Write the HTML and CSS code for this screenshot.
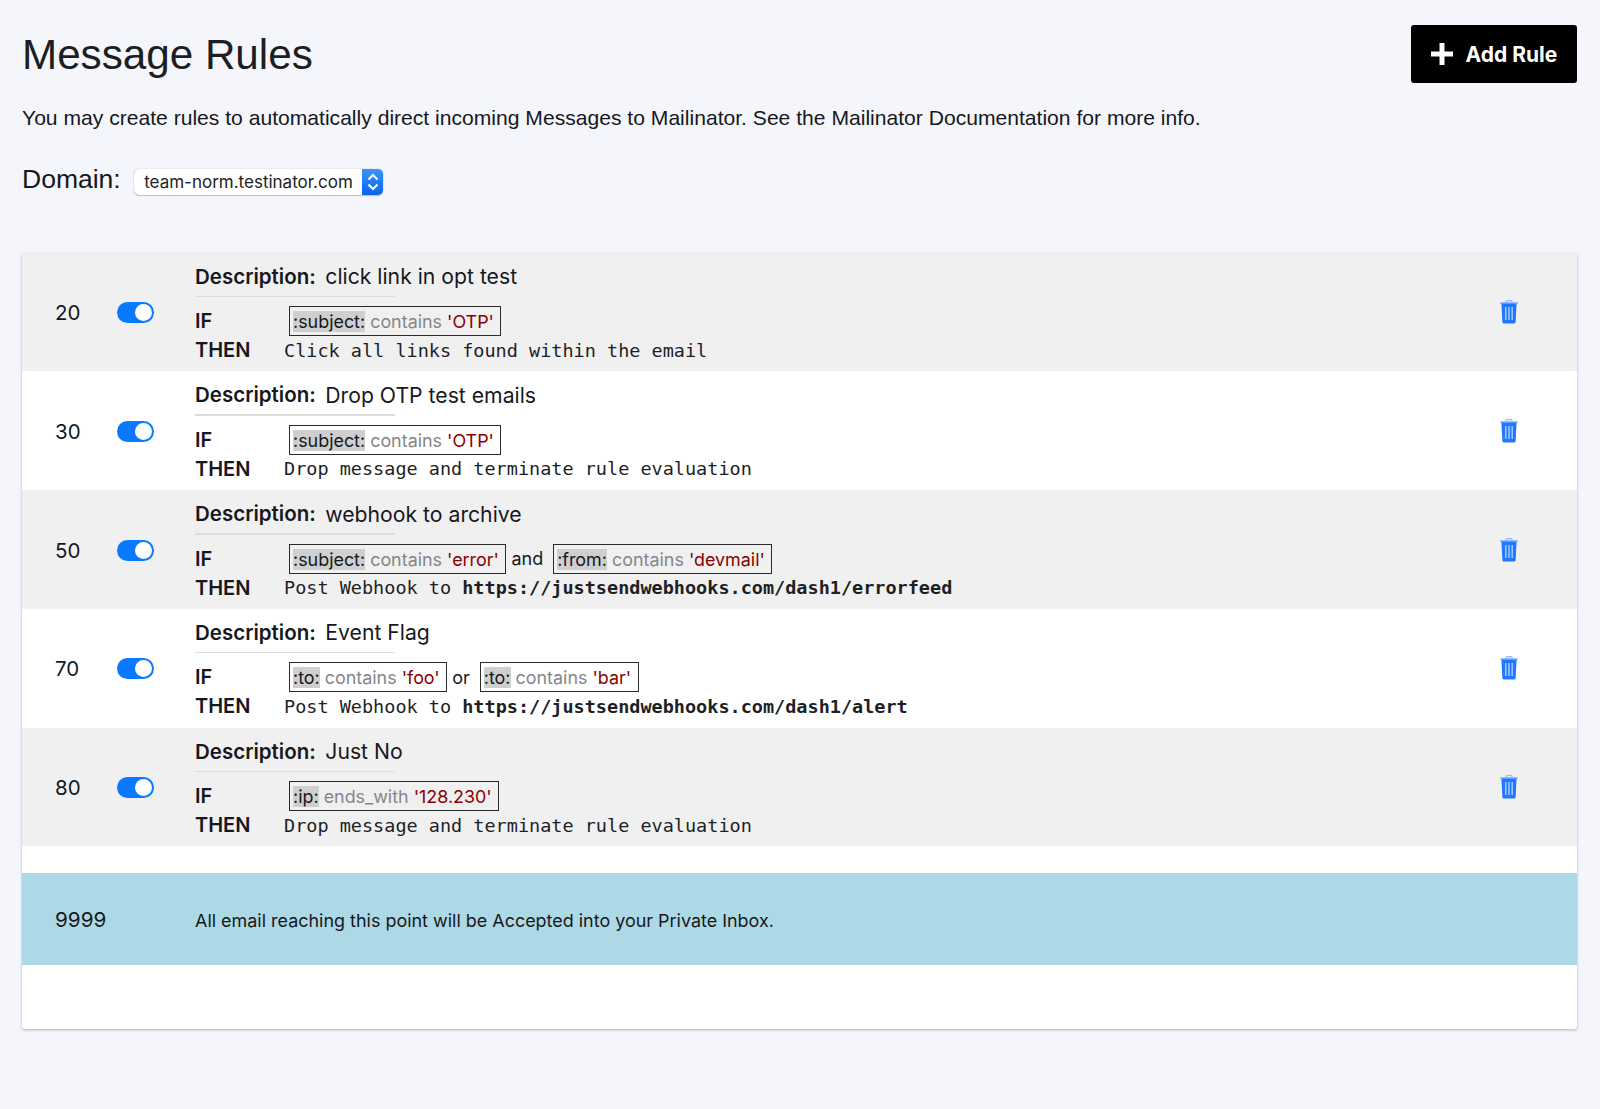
FILE: index.html
```html
<!DOCTYPE html>
<html lang="en">
<head>
<meta charset="utf-8">
<title>Message Rules</title>
<link rel="stylesheet" href="styles.css">
</head>
<body>
<svg class="defs" width="0" height="0" aria-hidden="true">
  <symbol id="trash" viewBox="0 0 18 24">
    <path d="M6 2.6V1.6C6 1 6.5.6 7 .6h4c.5 0 1 .4 1 1v1" fill="none" stroke="#8fb8ff" stroke-width="1.2"/>
    <path d="M.2 2.4h17.6v1.2H.2z" fill="#5a9bff"/>
    <path d="M1.4 3.6h15.2l-1 18.6c0 .7-.6 1.2-1.2 1.2H3.600c-.6 0-1.2-.5-1.2-1.2z" fill="#1f78ff"/>
    <path d="M5 7h1.600v13H5zM8.200 7h1.600v13H8.200zM11.400 7H13v13h-1.600z" fill="#9cc3ff"/>
  </symbol>
</svg>
<main class="page">
  <header class="top">
    <h1 class="title">Message Rules</h1>
    <button class="add" type="button">
      <svg class="plus" viewBox="0 0 22 22" width="22" height="22" aria-hidden="true"><path d="M8.500 0h5v8.500H22v5h-8.500V22h-5v-8.500H0v-5h8.500z" fill="#fff"/></svg>
      <span>Add Rule</span>
    </button>
  </header>
  <p class="intro">You may create rules to automatically direct incoming Messages to Mailinator. See the Mailinator Documentation for more info.</p>
  <div class="domain">
    <span class="domain-label">Domain:</span>
    <div class="select">
      <span class="select-text">team-norm.testinator.com</span>
      <span class="select-arrows">
        <svg viewBox="0 0 20 26" width="20" height="26" aria-hidden="true"><path d="M5.500 10.500 10 6l4.500 4.500M5.500 15.500 10 20l4.500-4.500" fill="none" stroke="#fff" stroke-width="2"/></svg>
      </span>
    </div>
  </div>

  <section class="card">
    <article class="rule shaded">
      <div class="num">20</div>
      <div class="toggle-cell"><span class="toggle"><span class="knob"></span></span></div>
      <div class="body">
        <div class="desc"><b>Description:</b><span class="desc-text">click link in opt test</span></div>
        <hr class="sep">
        <div class="line"><b class="kw">IF</b><span class="cond-list"><span class="cond"><span class="field">:subject:</span> <span class="op">contains</span> <span class="val">'OTP'</span></span></span></div>
        <div class="line"><b class="kw">THEN</b><code class="act">Click all links found within the email</code></div>
      </div>
      <div class="del"><svg class="trash" aria-hidden="true"><use href="#trash"/></svg></div>
    </article>
    <article class="rule">
      <div class="num">30</div>
      <div class="toggle-cell"><span class="toggle"><span class="knob"></span></span></div>
      <div class="body">
        <div class="desc"><b>Description:</b><span class="desc-text">Drop OTP test emails</span></div>
        <hr class="sep">
        <div class="line"><b class="kw">IF</b><span class="cond-list"><span class="cond"><span class="field">:subject:</span> <span class="op">contains</span> <span class="val">'OTP'</span></span></span></div>
        <div class="line"><b class="kw">THEN</b><code class="act">Drop message and terminate rule evaluation</code></div>
      </div>
      <div class="del"><svg class="trash" aria-hidden="true"><use href="#trash"/></svg></div>
    </article>
    <article class="rule shaded">
      <div class="num">50</div>
      <div class="toggle-cell"><span class="toggle"><span class="knob"></span></span></div>
      <div class="body">
        <div class="desc"><b>Description:</b><span class="desc-text">webhook to archive</span></div>
        <hr class="sep">
        <div class="line"><b class="kw">IF</b><span class="cond-list"><span class="cond"><span class="field">:subject:</span> <span class="op">contains</span> <span class="val">'error'</span></span><span class="join">and</span><span class="cond"><span class="field">:from:</span> <span class="op">contains</span> <span class="val">'devmail'</span></span></span></div>
        <div class="line"><b class="kw">THEN</b><code class="act">Post Webhook to <b>https://justsendwebhooks.com/dash1/errorfeed</b></code></div>
      </div>
      <div class="del"><svg class="trash" aria-hidden="true"><use href="#trash"/></svg></div>
    </article>
    <article class="rule">
      <div class="num">70</div>
      <div class="toggle-cell"><span class="toggle"><span class="knob"></span></span></div>
      <div class="body">
        <div class="desc"><b>Description:</b><span class="desc-text">Event Flag</span></div>
        <hr class="sep">
        <div class="line"><b class="kw">IF</b><span class="cond-list"><span class="cond"><span class="field">:to:</span> <span class="op">contains</span> <span class="val">'foo'</span></span><span class="join">or</span><span class="cond"><span class="field">:to:</span> <span class="op">contains</span> <span class="val">'bar'</span></span></span></div>
        <div class="line"><b class="kw">THEN</b><code class="act">Post Webhook to <b>https://justsendwebhooks.com/dash1/alert</b></code></div>
      </div>
      <div class="del"><svg class="trash" aria-hidden="true"><use href="#trash"/></svg></div>
    </article>
    <article class="rule shaded">
      <div class="num">80</div>
      <div class="toggle-cell"><span class="toggle"><span class="knob"></span></span></div>
      <div class="body">
        <div class="desc"><b>Description:</b><span class="desc-text">Just No</span></div>
        <hr class="sep">
        <div class="line"><b class="kw">IF</b><span class="cond-list"><span class="cond"><span class="field">:ip:</span> <span class="op">ends_with</span> <span class="val">'128.230'</span></span></span></div>
        <div class="line"><b class="kw">THEN</b><code class="act">Drop message and terminate rule evaluation</code></div>
      </div>
      <div class="del"><svg class="trash" aria-hidden="true"><use href="#trash"/></svg></div>
    </article>
    <div class="final">
      <div class="final-num">9999</div>
      <div class="final-text">All email reaching this point will be Accepted into your Private Inbox.</div>
    </div>
  </section>
</main>
</body>
</html>
```

FILE: styles.css
```css
* { box-sizing: border-box; }
html, body { margin: 0; height: 100%; }
body {
  background: #f4f6fb;
  color: #16181d;
  font-family: "Inter", "Liberation Sans", sans-serif;
}
.defs { position: absolute; }
.page { padding: 25px 23px 0 22px; }

.top { display: flex; justify-content: space-between; align-items: flex-start; height: 58px; }
.title {
  margin: 1px 0 0;
  font: 400 42.2px/58px "Liberation Sans", sans-serif;
  color: #1b1e24;
}
.add {
  display: flex; align-items: center; gap: 13px;
  width: 166px; height: 58px; padding: 0 0 0 19.5px;
  background: #000; color: #fff; border: 0; border-radius: 3px;
  font: 700 21px/1 "Inter", sans-serif;
}
.intro {
  margin: 20px 0 0;
  font: 400 21.1px/30px "Liberation Sans", sans-serif;
  color: #16181d;
}
.domain { display: flex; align-items: center; gap: 13.5px; margin-top: 29px; height: 34px; }
.domain-label { font: 400 26.5px/34px "Liberation Sans", sans-serif; }
.select {
  display: flex; align-items: center; justify-content: space-between;
  width: 249px; height: 26px; margin-top: 6px;
  background: #fff; border-radius: 5px;
  box-shadow: 0 0 1px rgba(0,0,0,.45), 0 1px 1px rgba(0,0,0,.2);
  overflow: hidden;
}
.select-text { padding: 1px 0 0 10px; font: 400 17px/1 "Inter", sans-serif; color: #222; }
.select-arrows {
  display: flex; align-items: center; justify-content: center;
  width: 21px; height: 26px;
  background: linear-gradient(#3d94fb, #0a62ee);
}

.card {
  margin-top: 56.5px; height: 776.5px;
  background: #fff; border-radius: 3px;
  box-shadow: 0 1px 3px rgba(0,0,0,.28);
  overflow: hidden;
}
.rule { display: flex; height: 118.75px; background: #fff; }
.rule.shaded { background: #f0f0f1; }
.num { width: 70px; padding: 45.5px 0 0 33px; font-size: 20.5px; line-height: 30px; }
.toggle-cell { width: 103px; padding-top: 49.5px; padding-left: 24.5px; }
.toggle {
  display: block; position: relative;
  width: 37px; height: 21px; border-radius: 11px;
  background: #0a78ff;
}
.knob {
  position: absolute; right: 2px; top: 2px;
  width: 17px; height: 17px; border-radius: 50%; background: #fff;
}
.body { flex: 1; padding-top: 8.5px; }
.desc { display: flex; gap: 9.5px; height: 30px; align-items: center; font-size: 21.2px; }
.desc b { font-size: 20.5px; font-weight: 600; }
.sep { width: 200px; height: 1.5px; margin: 4.5px 0 9.5px; border: 0; background: #dcdcdc; }
.line { display: flex; align-items: center; height: 29px; }
.kw { width: 89px; font-size: 20px; font-weight: 600; flex: none; }
.cond-list { display: flex; align-items: center; margin-left: 5px; }
.cond {
  display: inline-block; height: 30px; padding: 0 6.5px 0 3px;
  border: 1.5px solid #2b2b2b;
  font-size: 17.9px; line-height: 30px;
  white-space: pre;
}
.field { background: #cfcfcf; }
.op { color: #85868a; }
.val { color: #8b0000; }
.join { padding: 0 10px 0 5px; font-size: 18px; }
.act { font: 400 18.5px/29px "DejaVu Sans Mono", monospace; color: #1d1f24; white-space: pre; }
.act b { font-weight: 700; }
.del { width: 130px; padding: 47.5px 0 0 53px; }
.trash { display: block; width: 18px; height: 24px; }

.final { display: flex; align-items: center; height: 92px; margin-top: 26.75px; background: #add8e6; }
.final-num { width: 173px; padding-left: 33px; font-size: 20.7px; }
.final-text { font-size: 17.95px; padding-top: 2px; }
```
